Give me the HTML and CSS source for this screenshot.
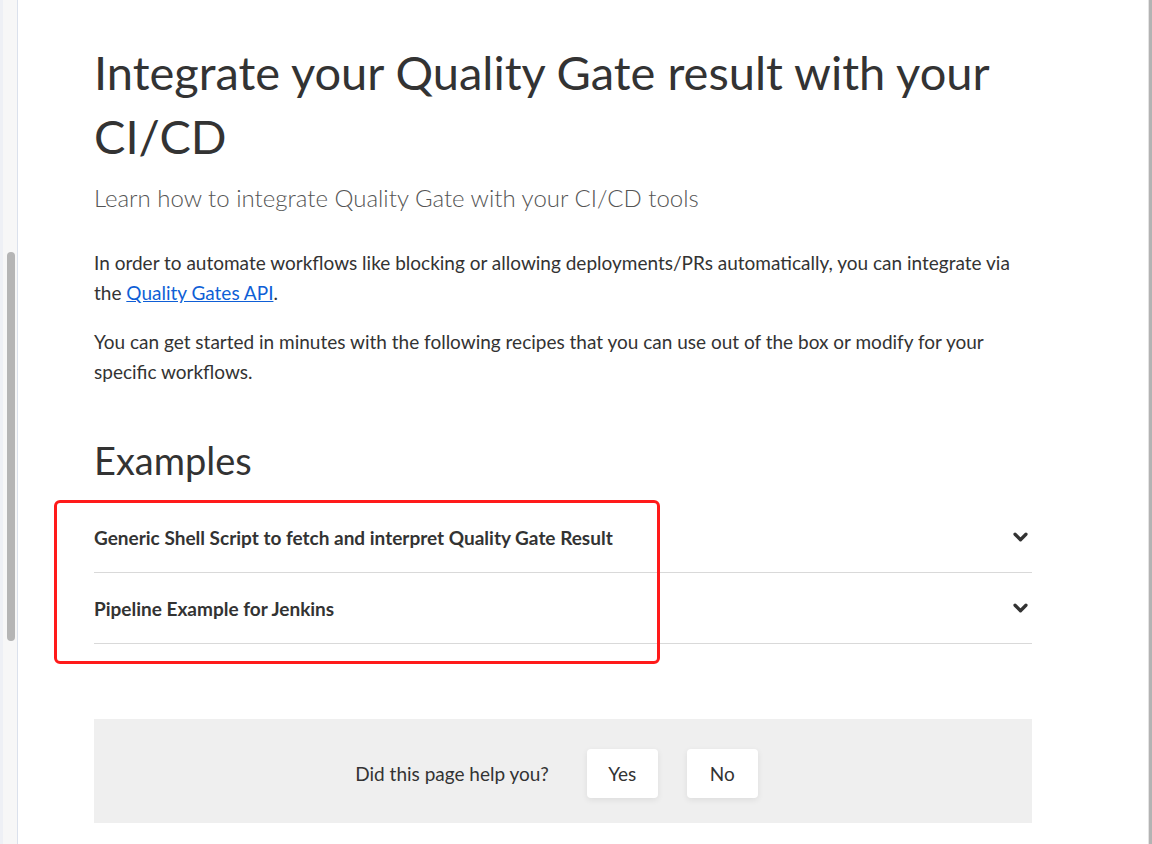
FILE: index.html
```html
<!DOCTYPE html>
<html lang="en">
<head>
<meta charset="utf-8">
<title>Integrate your Quality Gate result with your CI/CD</title>
<link rel="stylesheet" href="styles.css">
</head>
<body>
<div class="page">
  <div class="side-scroll"><div class="thumb"></div></div>
  <main class="main">
    <div class="content">
      <h1 class="title">Integrate your Quality Gate result with your CI/CD</h1>
      <p class="subtitle">Learn how to integrate Quality Gate with your CI/CD tools</p>
      <p class="para">In order to automate workflows like blocking or allowing deployments/PRs automatically, you can integrate via the <a href="#" class="link">Quality Gates API</a>.</p>
      <p class="para">You can get started in minutes with the following recipes that you can use out of the box or modify for your specific workflows.</p>
      <h2 class="section">Examples</h2>
      <div class="accordion">
        <div class="acc-row">
          <span class="acc-title">Generic Shell Script to fetch and interpret Quality Gate Result</span>
          <svg class="chev" viewBox="0 0 16 11" width="15" height="10"><path d="M2 2.5l6 6 6-6" fill="none" stroke="#333" stroke-width="3.6" stroke-linecap="round" stroke-linejoin="round"/></svg>
        </div>
        <div class="acc-row">
          <span class="acc-title">Pipeline Example for Jenkins</span>
          <svg class="chev" viewBox="0 0 16 11" width="15" height="10"><path d="M2 2.5l6 6 6-6" fill="none" stroke="#333" stroke-width="3.6" stroke-linecap="round" stroke-linejoin="round"/></svg>
        </div>
        <div class="highlight"></div>
      </div>
      <div class="feedback">
        <span class="fb-q">Did this page help you?</span>
        <button class="fb-btn">Yes</button>
        <button class="fb-btn">No</button>
      </div>
    </div>
  </main>
  <div class="side-right"></div>
</div>
</body>
</html>
```

FILE: styles.css
```css
html, body {
  margin: 0;
  padding: 0;
  height: 100%;
  overflow: hidden;
}
body {
  font-family: Lato, "Noto Sans", sans-serif;
  color: #333;
  background: #fff;
}
.page {
  display: flex;
  height: 844px;
}
.side-scroll {
  width: 14px;
  flex: 0 0 14px;
  background: #f7f7f7;
  border-left: 3px solid #eef0f5;
  border-right: 1px solid #dbe1ec;
  position: relative;
}
.thumb {
  position: absolute;
  left: 4px;
  width: 8px;
  top: 252px;
  height: 389px;
  background: #b5b5b5;
  border-radius: 4px;
}
.main {
  flex: 1;
  padding-left: 76px;
  overflow: hidden;
}
.side-right {
  flex: 0 0 3px;
  border-left: 1px solid #e4e4e4;
  margin-left: 2px;
  background: #b3b3b3;
}
.content {
  width: 938px;
  padding-top: 40px;
}
.title {
  font-size: 47px;
  font-weight: 400;
  line-height: 64px;
  margin: 0;
  color: #333;
}
.subtitle {
  font-size: 24px;
  font-weight: 300;
  color: #555;
  margin: 14px 0 0;
  line-height: 32px;
}
.para {
  font-size: 19px;
  line-height: 30px;
  margin: 34px 0 0;
}
.para + .para {
  margin-top: 19px;
}
.link {
  color: #0f5fd6;
  text-decoration: underline;
}
.section {
  font-size: 38px;
  font-weight: 400;
  line-height: 48px;
  margin: 49px 0 0;
}
.accordion {
  position: relative;
  margin-top: 18px;
}
.acc-row {
  display: flex;
  align-items: center;
  justify-content: space-between;
  height: 70px;
  border-bottom: 1px solid #d9d9d9;
}
.acc-title {
  font-size: 19px;
  font-weight: 700;
}
.chev {
  margin-right: 4px;
}
.highlight {
  position: absolute;
  box-sizing: border-box;
  left: -40px;
  top: -2px;
  width: 606px;
  height: 164px;
  border: 3px solid #ff1a1a;
  border-radius: 6px;
}
.feedback {
  box-sizing: border-box;
  margin-top: 75px;
  height: 104px;
  padding: 4px 13px 0 0;
  background: #efefef;
  display: flex;
  align-items: center;
  justify-content: center;
  gap: 29px;
}
.fb-q {
  font-size: 19px;
  margin-right: 9px;
}
.fb-btn {
  font-family: inherit;
  font-size: 19px;
  color: #333;
  background: #fff;
  border: none;
  border-radius: 4px;
  width: 71px;
  height: 49px;
  box-shadow: 0 2px 6px rgba(0,0,0,0.08);
}
```
